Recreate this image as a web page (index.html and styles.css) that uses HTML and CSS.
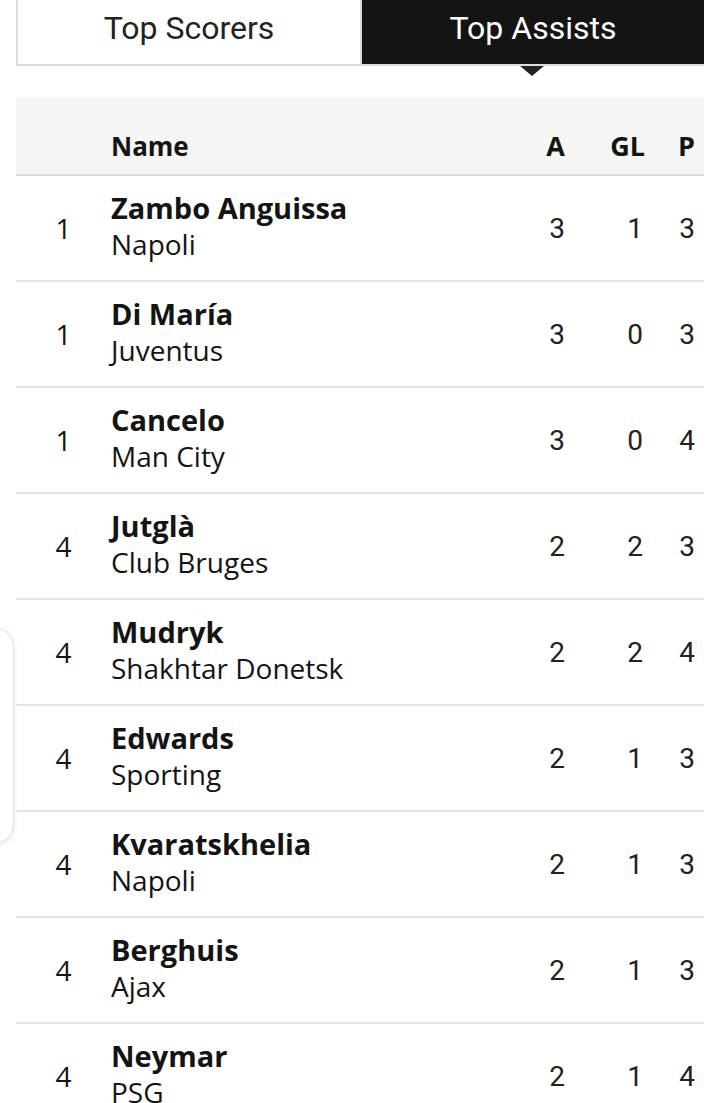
FILE: index.html
```html
<!DOCTYPE html>
<html lang="en">
<head>
  <meta charset="UTF-8">
  <meta name="viewport" content="width=device-width, initial-scale=1.0">
  <title>Top Assists</title>
  <link rel="stylesheet" href="styles.css">
</head>
<body>

  <div class="page">
    <!-- Tabs -->
    <div class="tabs">
      <button class="tab">Top Scorers</button>
      <button class="tab active">Top Assists</button>
    </div>

    <!-- Table -->
    <div class="table">
      <div class="row head">
        <span class="rank"></span>
        <span class="name">Name</span>
        <span class="num a">A</span>
        <span class="num gl">GL</span>
        <span class="num p">P</span>
      </div>

      <div class="row">
        <span class="rank">1</span>
        <span class="name"><b>Zambo Anguissa</b><span class="team">Napoli</span></span>
        <span class="num a">3</span><span class="num gl">1</span><span class="num p">3</span>
      </div>
      <div class="row">
        <span class="rank">1</span>
        <span class="name"><b>Di María</b><span class="team">Juventus</span></span>
        <span class="num a">3</span><span class="num gl">0</span><span class="num p">3</span>
      </div>
      <div class="row">
        <span class="rank">1</span>
        <span class="name"><b>Cancelo</b><span class="team">Man City</span></span>
        <span class="num a">3</span><span class="num gl">0</span><span class="num p">4</span>
      </div>
      <div class="row">
        <span class="rank">4</span>
        <span class="name"><b>Jutglà</b><span class="team">Club Bruges</span></span>
        <span class="num a">2</span><span class="num gl">2</span><span class="num p">3</span>
      </div>
      <div class="row">
        <span class="rank">4</span>
        <span class="name"><b>Mudryk</b><span class="team">Shakhtar Donetsk</span></span>
        <span class="num a">2</span><span class="num gl">2</span><span class="num p">4</span>
      </div>
      <div class="row">
        <span class="rank">4</span>
        <span class="name"><b>Edwards</b><span class="team">Sporting</span></span>
        <span class="num a">2</span><span class="num gl">1</span><span class="num p">3</span>
      </div>
      <div class="row">
        <span class="rank">4</span>
        <span class="name"><b>Kvaratskhelia</b><span class="team">Napoli</span></span>
        <span class="num a">2</span><span class="num gl">1</span><span class="num p">3</span>
      </div>
      <div class="row">
        <span class="rank">4</span>
        <span class="name"><b>Berghuis</b><span class="team">Ajax</span></span>
        <span class="num a">2</span><span class="num gl">1</span><span class="num p">3</span>
      </div>
      <div class="row">
        <span class="rank">4</span>
        <span class="name"><b>Neymar</b><span class="team">PSG</span></span>
        <span class="num a">2</span><span class="num gl">1</span><span class="num p">4</span>
      </div>
    </div>
  </div>

  <!-- floating side handle -->
  <div class="side-card"></div>

</body>
</html>
```

FILE: styles.css
```css
:root {
  --ink: #141414;
  --line: #e6e6e6;
  --head-bg: #f5f5f3;
}

body {
  margin: 0;
  background: #fff;
  color: var(--ink);
  font-family: "Open Sans", Arial, sans-serif;
  overflow: hidden;
}

.page {
  padding: 0 16px;
}

/* Tabs */
.tabs {
  display: flex;
  height: 64px;
  border-bottom: 2px solid #dcdcdc;
}

.tab {
  flex: 1;
  position: relative;
  margin: 0;
  padding: 0 0 8px;
  font-family: Roboto, Arial, sans-serif;
  font-size: 32px;
  color: #222;
  background: #fff;
  border: 2px solid #dcdcdc;
  border-top: none;
  border-bottom: none;
}

.tab.active {
  background: var(--ink);
  color: #fff;
  border: none;
}

.tab.active::after {
  content: "";
  position: absolute;
  left: 50%;
  bottom: -12px;
  margin-left: -13px;
  border-left: 12px solid transparent;
  border-right: 12px solid transparent;
  border-top: 10px solid #222;
}

/* Table */
.table {
  margin-top: 31px;
}

.row {
  display: grid;
  grid-template-columns: 95px 1fr 60px 80px 59px;
  align-items: center;
  height: 104px;
  border-bottom: 2px solid var(--line);
}

.row.head {
  height: 77px;
  background: var(--head-bg);
  border-bottom-color: #dcdcdc;
  align-items: end;
  font-weight: bold;
  font-size: 26px;
}

.row.head span {
  padding-bottom: 10px;
}

.rank {
  text-align: center;
  font-size: 28px;
}

.name {
  display: flex;
  flex-direction: column;
  line-height: 36px;
  padding-bottom: 4px;
}

.name b {
  font-size: 29px;
}

.team {
  font-size: 28px;
}

.num {
  text-align: right;
  font-family: Roboto, Arial, sans-serif;
  font-size: 28px;
  color: #222;
}

.num.gl {
  padding-right: 2px;
}

.row.head .num {
  font-family: "Open Sans", Arial, sans-serif;
  font-size: 27px;
  color: var(--ink);
  padding-right: 0;
}

.num.p,
.row.head .num.p {
  padding-right: 9px;
}

/* floating handle at the left edge */
.side-card {
  position: absolute;
  left: -30px;
  top: 627px;
  width: 42px;
  height: 215px;
  background: #fff;
  border: 1px solid #e2e2e2;
  border-radius: 20px;
  box-shadow: 0 1px 5px rgba(0, 0, 0, 0.1);
}
```
